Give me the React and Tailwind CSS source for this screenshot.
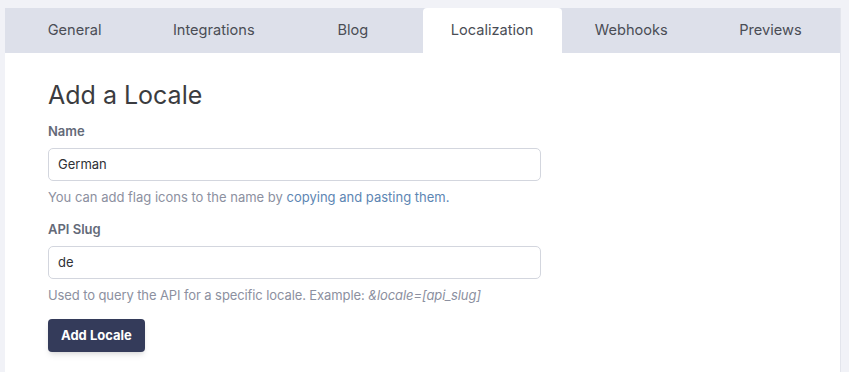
import React, { useState } from "react";

const tabs = ["General", "Integrations", "Blog", "Localization", "Webhooks", "Previews"];

const App = () => {
  const [active, setActive] = useState("Localization");
  const [name, setName] = useState("German");
  const [slug, setSlug] = useState("de");

  return (
    <div
      className="min-h-[372px] bg-[#f1f2f7] pt-2 pl-[5px] pr-2"
      style={{ fontFamily: "Inter, 'Open Sans', sans-serif" }}
    >
      <div className="bg-white min-h-[364px] border-r border-[#e3e5ec]">
        {/* Tabs */}
        <div className="flex bg-[#dde0ea] h-[45px]">
          {tabs.map((t) => (
            <button
              key={t}
              onClick={() => setActive(t)}
              className={`flex-1 text-[14.6px] text-[#4a4d55] flex items-center justify-center pt-[1px] ${
                active === t ? "bg-white rounded-t-[4px]" : ""
              }`}
            >
              {t}
            </button>
          ))}
        </div>

        {/* Form */}
        <div className="pl-[43px] pt-[26px] w-[536px]">
          <h1 className="text-[25px] text-[#3b3c40] leading-8 mb-[11px]">Add a Locale</h1>

          <label className="block text-[13px] font-semibold text-[#646a78] mb-[6px]">Name</label>
          <input
            value={name}
            onChange={(e) => setName(e.target.value)}
            className="w-full h-[33px] border border-[#d3d6de] rounded-[5px] px-[9px] text-[13px] text-[#2f3136] outline-none"
          />
          <p className="text-[13px] text-[#8c90a0] mt-[7px] mb-[13px]">
            You can add flag icons to the name by{" "}
            <a href="#" className="text-[#5d86b3]">copying and pasting them.</a>
          </p>

          <label className="block text-[13px] font-semibold text-[#646a78] mb-[6px]">API Slug</label>
          <input
            value={slug}
            onChange={(e) => setSlug(e.target.value)}
            className="w-full h-[33px] border border-[#d3d6de] rounded-[5px] px-[9px] text-[13px] text-[#2f3136] outline-none"
          />
          <p className="text-[13px] text-[#8c90a0] mt-[7px] mb-[14px] tracking-[-0.1px]">
            Used to query the API for a specific locale. Example: <em>&amp;locale=[api_slug]</em>
          </p>

          <button className="h-[33px] px-[13px] bg-[#343b5a] text-white text-[13px] font-bold rounded-[4px] shadow-md">
            Add Locale
          </button>
        </div>
      </div>
    </div>
  );
};

export default App;
